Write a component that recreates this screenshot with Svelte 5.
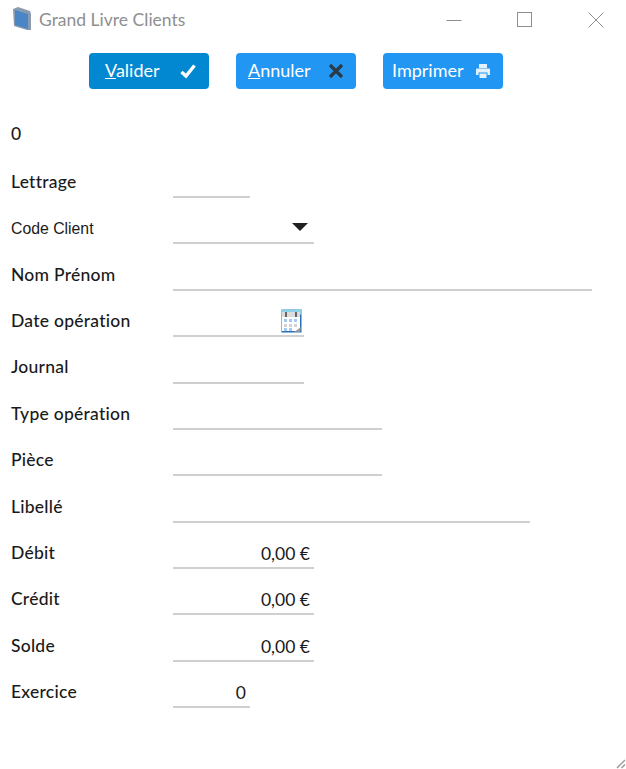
<script>
	const fields = [
		{ label: "Lettrage", width: 77 },
		{ label: "Code Client", width: 141, plain: true, select: true },
		{ label: "Nom Prénom", width: 419 },
		{ label: "Date opération", width: 131, date: true },
		{ label: "Journal", width: 131 },
		{ label: "Type opération", width: 209 },
		{ label: "Pièce", width: 209 },
		{ label: "Libellé", width: 357 },
		{ label: "Débit", width: 141, value: "0,00 €" },
		{ label: "Crédit", width: 141, value: "0,00 €" },
		{ label: "Solde", width: 141, value: "0,00 €" },
		{ label: "Exercice", width: 77, value: "0" }
	];
</script>

<div class="window">
	<header class="titlebar">
		<svg class="app-icon" width="20" height="25" viewBox="0 0 20 25">
			<path d="M1 3 L6 1 L18 5 L19 8 L19 24 L15 24 L2 20 Z" fill="#8a9bb0" />
			<path d="M3 4 L16 8 L16 23 L3 19 Z" fill="#4a86c5" />
		</svg>
		<span class="title">Grand Livre Clients</span>
		<div class="controls">
			<svg width="16" height="16" viewBox="0 0 16 16"><path d="M0.5 8.5 H15.5" stroke="#8e8e8e" fill="none" /></svg>
			<svg width="16" height="16" viewBox="0 0 16 16"><rect x="0.5" y="0.5" width="14" height="14" stroke="#8e8e8e" fill="none" /></svg>
			<svg width="16" height="16" viewBox="0 0 16 16"><path d="M0.5 0.5 L15.5 15.5 M15.5 0.5 L0.5 15.5" stroke="#8e8e8e" fill="none" /></svg>
		</div>
	</header>

	<div class="toolbar">
		<button class="btn primary">
			<span class="btn-label"><u>V</u>alider</span>
			<svg width="18" height="16" viewBox="0 0 18 16"><path d="M2.5 9 L7 13 L15.5 2.5" stroke="#fff" stroke-width="3.4" fill="none" /></svg>
		</button>
		<button class="btn">
			<span class="btn-label"><u>A</u>nnuler</span>
			<svg width="16" height="16" viewBox="0 0 16 16"><path d="M2 2 L14 14 M14 2 L2 14" stroke="#2b3a47" stroke-width="3.2" fill="none" /></svg>
		</button>
		<button class="btn">
			<span class="btn-label">Imprimer</span>
			<svg width="16" height="16" viewBox="0 0 16 16">
				<path d="M4 1 H12 V5 H4 Z M1 6.5 Q1 5.5 2 5.5 H14 Q15 5.5 15 6.5 V12 H12.5 V9.5 H3.5 V12 H1 Z M4.5 10.5 H11.5 V15 H4.5 Z" fill="#e4f1fd" />
			</svg>
		</button>
	</div>

	<div class="form">
		<div class="row id-row"><span class="label">0</span></div>
		{#each fields as f}
			<div class="row">
				<span class="label" class:plain={f.plain}>{f.label}</span>
				<div class="input" style="width: {f.width}px">
					{#if f.value}<span class="value">{f.value}</span>{/if}
					{#if f.select}<span class="arrow"></span>{/if}
					{#if f.date}
						<svg class="cal" width="22" height="24" viewBox="0 0 22 24">
							<rect x="0.5" y="0.5" width="20" height="23" fill="#2a6fb5" />
							<rect x="0.5" y="0.5" width="20" height="5" fill="#8fd3ea" />
							<rect x="1" y="3" width="18" height="19" fill="#fff" />
							<rect x="1" y="3" width="18" height="5" fill="#dcdcdc" />
							<rect x="4" y="3" width="2" height="5" fill="#666" />
							<rect x="14" y="3" width="2" height="5" fill="#666" />
							<path d="M3 10 h3 v3 h-3 z M8 10 h3 v3 h-3 z M13 10 h3 v3 h-3 z M3 19 h3 v3 h-3 z M8 19 h3 v3 h-3 z" fill="#a3c8f5" />
							<path d="M3 15 h3 v3 h-3 z M8 15 h3 v3 h-3 z M13 15 h3 v3 h-3 z" fill="#d2d2d2" />
							<path d="M13 23 L20 18 L19 23 Z" fill="#9a9a9a" />
						</svg>
					{/if}
				</div>
			</div>
		{/each}
	</div>

	<svg class="grip" width="10" height="10" viewBox="0 0 10 10">
		<path d="M1 9 L9 1 M5.5 9 L9 5.5" stroke="#9a9a9a" stroke-width="1.4" fill="none" />
	</svg>
</div>

<style>
	:global(body) {
		background: #fff;
	}
	.window {
		position: relative;
		height: 769px;
		overflow: hidden;
		font-family: "Lato", "Open Sans", sans-serif;
		font-size: 17.5px;
		letter-spacing: 0.25px;
		color: #1a1a1a;
	}
	.titlebar {
		display: flex;
		align-items: center;
		height: 40px;
		padding-left: 12px;
	}
	.app-icon {
		margin-right: 7px;
		margin-top: -3px;
	}
	.title {
		font-size: 17.5px;
		letter-spacing: 0;
		color: #8f8f8f;
		padding-bottom: 2px;
	}
	.controls {
		display: flex;
		gap: 55px;
		margin-left: auto;
		margin-right: 22px;
	}
	.toolbar {
		display: flex;
		gap: 27px;
		padding: 13px 0 0 89px;
	}
	.btn {
		display: flex;
		align-items: center;
		justify-content: space-between;
		width: 120px;
		height: 36px;
		padding: 0 12px 0 9px;
		border: 0;
		border-radius: 4px;
		background: #2196f3;
		color: #fff;
		font: inherit;
		font-size: 18px;
	}
	.btn-label {
		padding-bottom: 2px;
	}
	.btn.primary {
		background: #0288d1;
		padding-left: 16px;
		padding-right: 12px;
	}
	.btn:nth-child(2) {
		padding-left: 12px;
	}
	.form {
		padding: 16.2px 0 0 11px;
	}
	.row {
		display: flex;
		align-items: flex-end;
		height: 46.4px;
	}
	.label {
		width: 162px;
		flex: none;
		align-self: center;
		padding-top: 13px;
		font-weight: 500;
	}
	.id-row .label {
		padding-top: 11px;
	}
	.label.plain {
		font-family: "Liberation Sans", Arial, sans-serif;
		font-size: 15.8px;
		letter-spacing: 0;
		font-weight: 400;
		padding-top: 15px;
	}
	.input {
		position: relative;
		display: flex;
		align-items: center;
		justify-content: flex-end;
		height: 32px;
		box-sizing: border-box;
		border-bottom: 2px solid #cfcfcf;
	}
	.value {
		padding-right: 4px;
		padding-top: 3px;
		letter-spacing: 0;
	}
	.arrow {
		margin-right: 6px;
		border-left: 8px solid transparent;
		border-right: 8px solid transparent;
		border-top: 8px solid #222;
	}
	.cal {
		position: absolute;
		right: 1px;
		bottom: 2px;
	}
	.grip {
		position: absolute;
		right: 0;
		bottom: 0;
	}
</style>
